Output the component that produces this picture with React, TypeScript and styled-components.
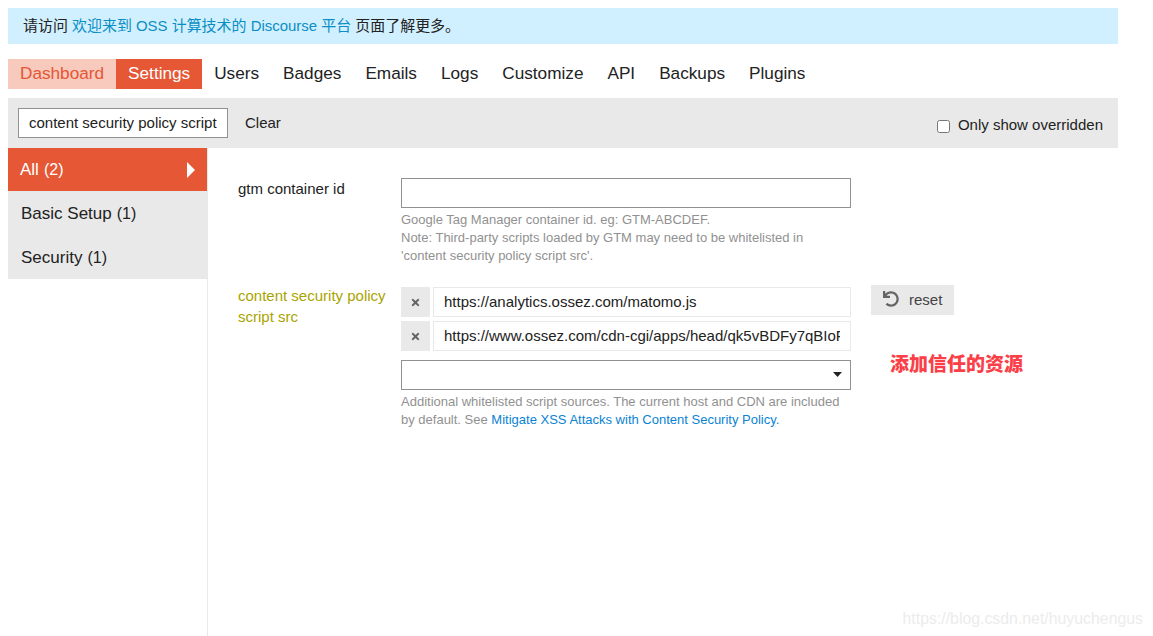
import React from 'react';
import styled, { createGlobalStyle } from 'styled-components';
import { FaUndo, FaTimes } from 'react-icons/fa';

const Global = createGlobalStyle`
  html, body { margin: 0; padding: 0; background: #fff; }
  body { font-family: "Liberation Sans", Arial, "Noto Sans CJK SC", sans-serif; color: #222; }
  * { box-sizing: border-box; }
`;
const Page = styled.div`
  position: relative; width: 1153px; height: 636px; overflow: hidden; padding: 8px 35px 0 8px;
  display: flex; flex-direction: column;
`;
const Notice = styled.div`
  height: 36px; background: #d1f0ff; padding: 0 14px 3px 15px; display: flex; align-items: center;
  font-size: 14.96px; color: #222; white-space: pre; margin-bottom: 0;
`;
const NoticeLink = styled.a` color: #0a8ec4; `;
const Nav = styled.nav` display: flex; margin-top: 15px; height: 30px; `;
const Tab = styled.a<{ $variant?: 'soft' | 'active' }>`
  display: flex; align-items: center; padding: 0 12px 2px; font-size: 17.2px;
  color: ${p => p.$variant === 'soft' ? '#e45735' : p.$variant === 'active' ? '#fff' : '#222'};
  background: ${p => p.$variant === 'soft' ? '#f8c9bd' : p.$variant === 'active' ? '#e65735' : 'transparent'};
`;
const Toolbar = styled.div`
  margin-top: 9px; height: 50px; background: #e9e9e9; padding: 10px 15px 0 10px;
  display: flex; align-items: flex-start;
`;
const Search = styled.input`
  width: 210px; height: 30px; border: 1px solid #919191; background: #fff; padding: 0 10px 2px;
  font: 15px "Liberation Sans", sans-serif; color: #222; outline: none;
`;
const Clear = styled.span` margin-left: 17px; font-size: 15px; line-height: 30px; color: #222; `;
const Overridden = styled.label`
  margin-left: auto; display: flex; align-items: center; font-size: 15px; color: #222; height: 32px;
`;
const Check = styled.input` width: 13px; height: 13px; margin: 5px 8px 0 0; `;
const Body = styled.div` flex: 1; display: flex; `;
const Side = styled.aside` width: 200px; border-right: 1px solid #e9e9e9; `;
const SideList = styled.div` width: 199px; background: #e9e9e9; `;
const SideItem = styled.div<{ $active?: boolean }>`
  position: relative; height: ${p => p.$active ? 43 : 44}px; display: flex; align-items: center; padding: ${p => p.$active ? '0 12px' : '2px 13px 0'};
  font-size: 17px; color: ${p => p.$active ? '#fff' : '#222'};
  background: ${p => p.$active ? '#e65735' : 'transparent'};
`;
const Count = styled.span` font-size: 16px; margin-left: 5px; `;
const Arrow = styled.svg` position: absolute; left: 179px; top: 14px; `;
const Main = styled.main` flex: 1; padding: 30px 0 0 30px; `;
const Row = styled.section` display: grid; grid-template-columns: 163px 450px auto; margin-bottom: 22px; `;
const Label = styled.div<{ $changed?: boolean }>`
  font-size: 15px; line-height: 21px; padding-right: 10px; margin-top: ${p => p.$changed ? '-2px' : 0}; color: ${p => p.$changed ? '#a9a400' : '#222'};
`;
const Field = styled.input`
  display: block; width: 450px; height: 30px; border: 1px solid #919191; background: #fff; outline: none;
`;
const Desc = styled.div` margin-top: 3px; font-size: 13px; line-height: 18px; color: #919191; `;
const DescLink = styled.a` color: #0a83d4; `;
const Chip = styled.div` display: flex; gap: 3px; height: 30px; margin-bottom: 4px; `;
const ChipX = styled.button`
  width: 29px; height: 30px; border: 0; padding: 0; background: #e9e9e9; color: #646464;
  display: flex; align-items: center; justify-content: center; font-size: 11px;
`;
const ChipValue = styled.input`
  flex: 1; min-width: 0; height: 30px; border: 1px solid #e9e9e9; padding: 0 10px 2px; outline: none;
  font: 15px "Liberation Sans", sans-serif; color: #222; background: #fff;
`;
const Select = styled.div`
  margin-top: 9px; height: 30px; border: 1px solid #919191; display: flex; align-items: center; justify-content: flex-end; padding-right: 8px;
`;
const Caret = styled.svg` display: block; margin-top: -2px; `;
const Side2 = styled.div` padding-left: 20px; display: flex; flex-direction: column; align-items: flex-start; margin-top: -2px; `;
const Reset = styled.button`
  width: 83px; height: 30px; border: 0; background: #e9e9e9; color: #444; display: flex; align-items: center; padding: 0 0 2px 12px; gap: 10px;
  font: 15px "Liberation Sans", sans-serif;
  svg { color: #646464; font-size: 16px; }
`;
const Note = styled.div`
  margin: 35px 0 0 19px; font: 900 19px/26px "Noto Sans CJK SC", sans-serif; color: #fa3f48; white-space: nowrap;
`;
const Watermark = styled.div`
  position: absolute; right: 10px; bottom: 8px; font-size: 15.85px; color: #ececec;
`;

const tabs = ['Users', 'Badges', 'Emails', 'Logs', 'Customize', 'API', 'Backups', 'Plugins'];

export default function App() {
  return (
    <Page>
      <Global />
      <Notice>请访问 <NoticeLink>欢迎来到 OSS 计算技术的 Discourse 平台</NoticeLink> 页面了解更多。</Notice>
      <Nav>
        <Tab $variant="soft">Dashboard</Tab>
        <Tab $variant="active">Settings</Tab>
        {tabs.map(t => <Tab key={t}>{t}</Tab>)}
      </Nav>
      <Toolbar>
        <Search readOnly value="content security policy script" />
        <Clear>Clear</Clear>
        <Overridden><Check type="checkbox" />Only show overridden</Overridden>
      </Toolbar>
      <Body>
        <Side>
          <SideList>
            <SideItem $active>All <Count>(2)</Count>
              <Arrow width="8" height="16" viewBox="0 0 8 16"><path d="M0 0L8 8L0 16Z" fill="#fff" /></Arrow>
            </SideItem>
            <SideItem>Basic Setup <Count>(1)</Count></SideItem>
            <SideItem>Security <Count>(1)</Count></SideItem>
          </SideList>
        </Side>
        <Main>
          <Row>
            <Label>gtm container id</Label>
            <div>
              <Field readOnly />
              <Desc>
                Google Tag Manager container id. eg: GTM-ABCDEF.<br />
                Note: Third-party scripts loaded by GTM may need to be whitelisted in<br />
                'content security policy script src'.
              </Desc>
            </div>
          </Row>
          <Row>
            <Label $changed>content security policy script src</Label>
            <div>
              <Chip><ChipX><FaTimes /></ChipX><ChipValue readOnly value="https://analytics.ossez.com/matomo.js" /></Chip>
              <Chip><ChipX><FaTimes /></ChipX><ChipValue readOnly value="https://www.ossez.com/cdn-cgi/apps/head/qk5vBDFy7qBIoFUmkKZQHQ.js" /></Chip>
              <Select>
                <Caret width="9" height="5" viewBox="0 0 9 5"><path d="M0 0H9L4.5 5Z" fill="#222" /></Caret>
              </Select>
              <Desc>
                Additional whitelisted script sources. The current host and CDN are included<br />
                by default. See <DescLink>Mitigate XSS Attacks with Content Security Policy.</DescLink>
              </Desc>
            </div>
            <Side2>
              <Reset><FaUndo />reset</Reset>
              <Note>添加信任的资源</Note>
            </Side2>
          </Row>
        </Main>
      </Body>
      <Watermark>https://blog.csdn.net/huyuchengus</Watermark>
    </Page>
  );
}
